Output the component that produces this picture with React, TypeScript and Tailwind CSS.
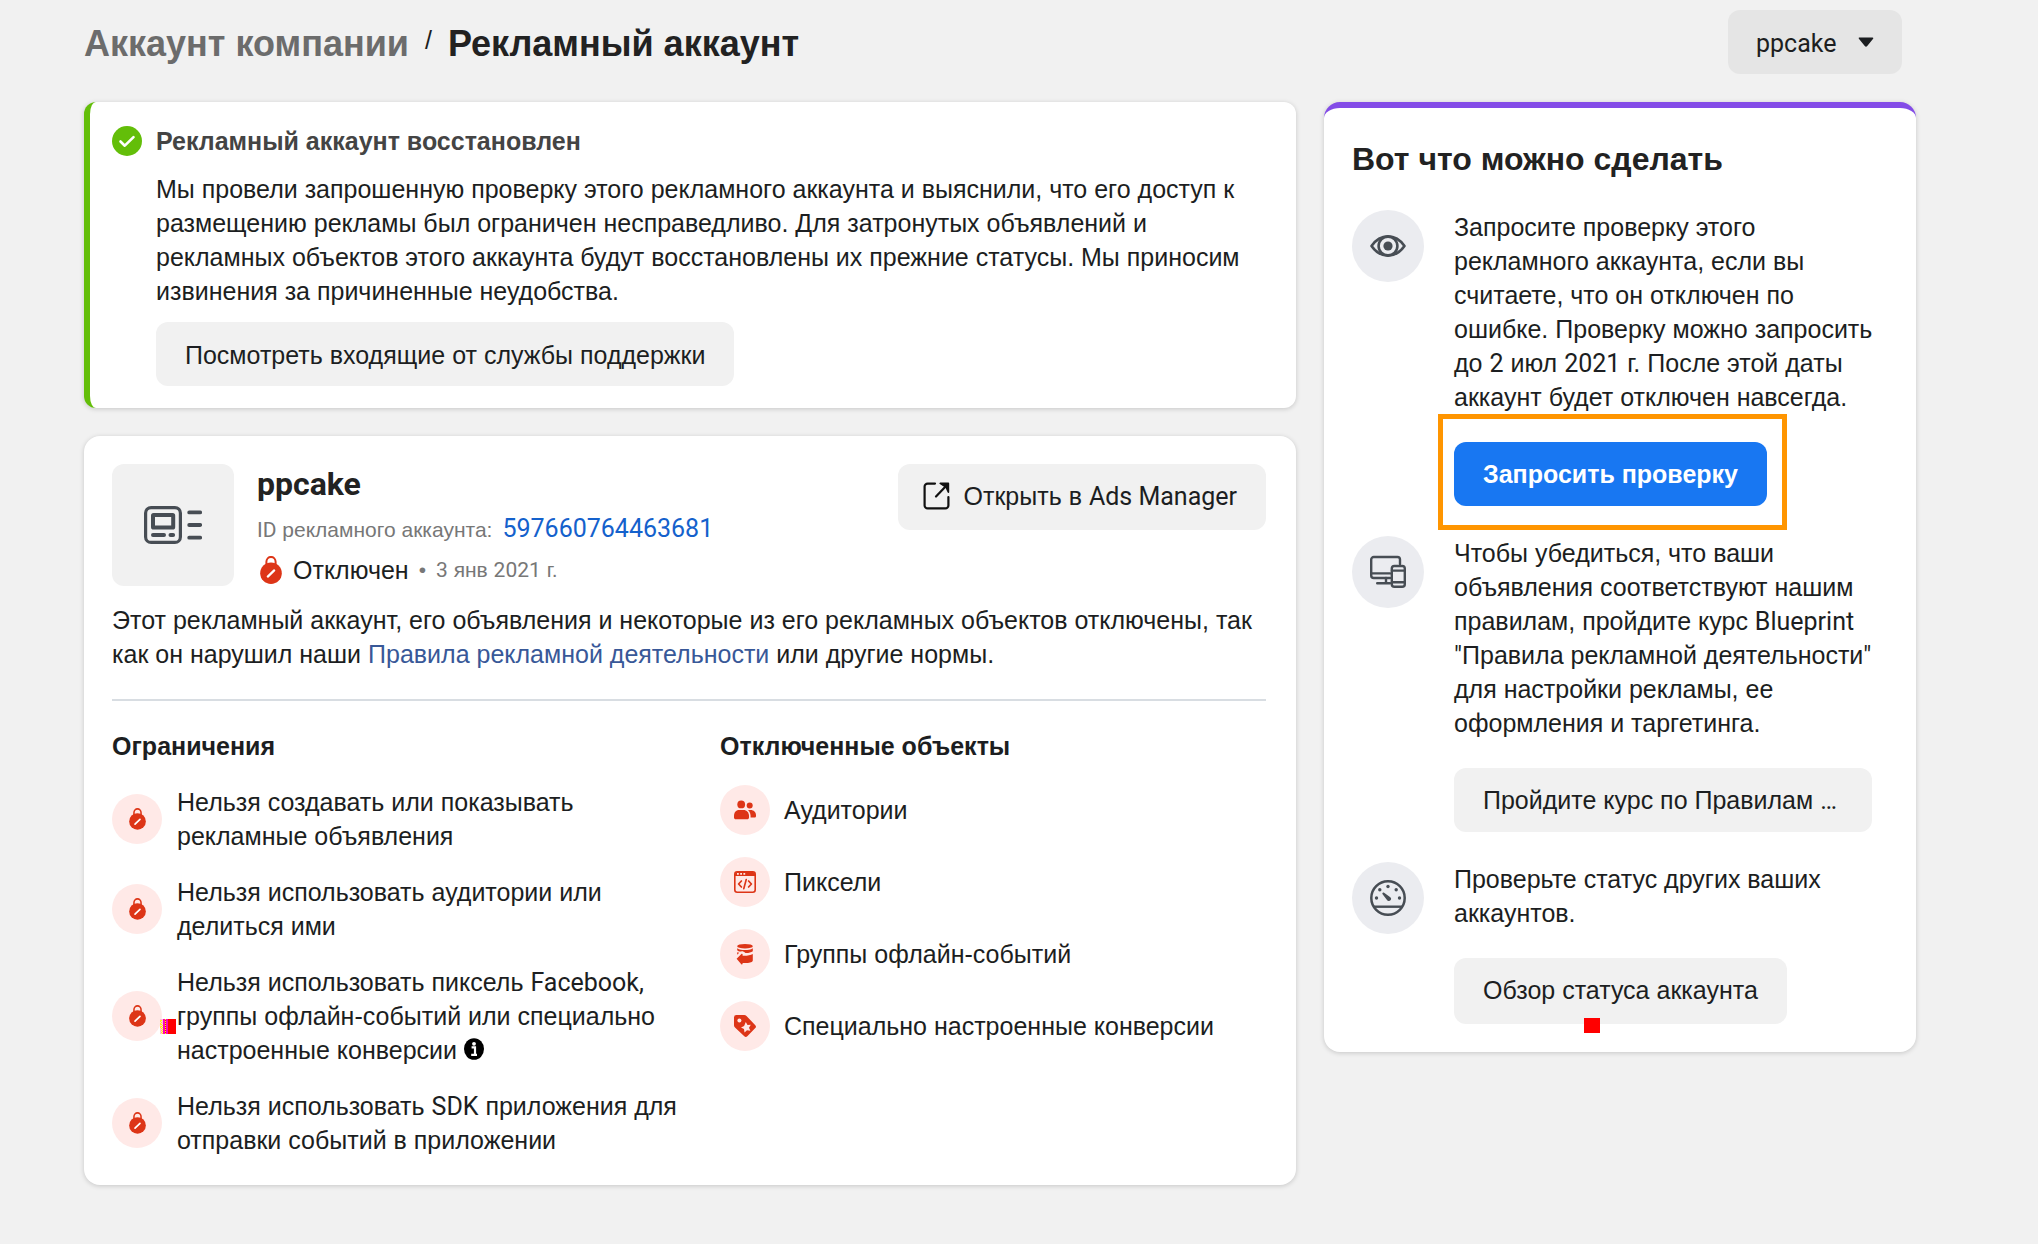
import React from 'react';

interface IconProps {
  className?: string;
}

const RED = '#dd3517';
const SLATE = '#474d54';

// Latin words and digits are set in Roboto, Cyrillic in the body face.
const Latin: React.FC<{ children: React.ReactNode }> = ({ children }) => (
  <span className="font-['Roboto',sans-serif] leading-none">{children}</span>
);

const CheckIcon: React.FC<IconProps> = ({ className }) => (
  <svg viewBox="0 0 30 30" className={className} aria-hidden="true">
    <circle cx="15" cy="15" r="15" fill="#63be09" />
    <path d="M8.5 15.5l4.3 4.2 8.7-8.6" fill="none" stroke="#fff" strokeWidth="2.6" strokeLinecap="round" strokeLinejoin="round" />
  </svg>
);

const LockIcon: React.FC<IconProps> = ({ className }) => (
  <svg viewBox="0 0 22 28" className={className} aria-hidden="true">
    <path d="M6.4 9V5.8a4.6 4.9 0 0 1 9.2 0V9" fill="none" stroke={RED} strokeWidth="2" />
    <circle cx="11" cy="17.2" r="10.8" fill={RED} />
    <path d="M7.8 20.6l6.4-6.2" stroke="#fff" strokeWidth="2.2" strokeLinecap="round" />
  </svg>
);

const AdAccountIcon: React.FC<IconProps> = ({ className }) => (
  <svg viewBox="0 0 58 38" className={className} fill="none" stroke={SLATE} aria-hidden="true">
    <rect x="1.6" y="1.6" width="34.8" height="34.8" rx="5.5" strokeWidth="3.2" />
    <rect x="9" y="9" width="20.2" height="12.6" rx="0.6" strokeWidth="4" />
    <path d="M9 29h11M26.5 29h2.6" strokeWidth="4" strokeLinecap="round" />
    <path d="M45.2 6.4h11M45.2 19h11M45.2 31.7h11" strokeWidth="3.8" strokeLinecap="round" />
  </svg>
);

const ExternalIcon: React.FC<IconProps> = ({ className }) => (
  <svg viewBox="0 0 27 28" className={className} fill="none" stroke="#111" strokeWidth="2.2" aria-hidden="true">
    <path d="M12 1.6H4.6a3 3 0 0 0-3 3v18.8a3 3 0 0 0 3 3h17.8a3 3 0 0 0 3-3V15" strokeLinecap="round" />
    <path d="M13 14.5L24 3" strokeLinecap="round" />
    <path d="M17.2 1.4h8.2v8.8L23 5z" fill="#111" stroke="#111" strokeWidth="1.6" strokeLinejoin="round" />
  </svg>
);

const EyeIcon: React.FC<IconProps> = ({ className }) => (
  <svg viewBox="0 0 36 36" className={className} fill="none" stroke={SLATE} strokeWidth="2.6" aria-hidden="true">
    <path d="M1.5 18C6 11.6 11.4 8.4 18 8.4S30 11.6 34.5 18C30 24.4 24.6 27.6 18 27.6S6 24.4 1.5 18z" strokeLinejoin="round" />
    <circle cx="18" cy="18" r="9.4" />
    <circle cx="18" cy="18" r="4.6" fill={SLATE} stroke="none" />
  </svg>
);

const DevicesIcon: React.FC<IconProps> = ({ className }) => (
  <svg viewBox="0 0 36 36" className={className} fill="none" stroke={SLATE} strokeWidth="2.4" strokeLinecap="round" aria-hidden="true">
    <path d="M30 10V5.6A2.6 2.6 0 0 0 27.4 3H3.8a2.6 2.6 0 0 0-2.6 2.6v15.8A2.6 2.6 0 0 0 3.8 24H20" />
    <path d="M1.5 19.4H20M16 24v5M7.2 29.3H20" />
    <rect x="21.8" y="12" width="13" height="20.8" rx="2.6" />
    <path d="M22 16.6h12.6M22 28.2h12.6" />
  </svg>
);

const GaugeIcon: React.FC<IconProps> = ({ className }) => (
  <svg viewBox="0 0 36 36" className={className} fill={SLATE} aria-hidden="true">
    <circle cx="18" cy="18" r="16.7" fill="none" stroke={SLATE} strokeWidth="2.5" />
    <path d="M4 26.7h28" stroke={SLATE} strokeWidth="2.4" />
    <circle cx="6.5" cy="18" r="1.7" />
    <circle cx="9.8" cy="9.8" r="1.7" />
    <circle cx="18" cy="6.5" r="1.7" />
    <circle cx="26.2" cy="9.8" r="1.7" />
    <circle cx="29.5" cy="18" r="1.7" />
    <path d="M12.6 14.2c-.8-1.2.4-2.300 1.500-1.500l5.900 4.200a2.200 2.200 0 1 1-3 3z" />
  </svg>
);

const PeopleIcon: React.FC<IconProps> = ({ className }) => (
  <svg viewBox="0 0 22 22" className={className} fill={RED} aria-hidden="true">
    <circle cx="7.2" cy="5.4" r="3.9" />
    <circle cx="15.7" cy="6.4" r="3" />
    <path d="M5.2 11h4.2c3.4 0 5.6 2.6 5.6 6v1.4c0 1.2-.8 1.8-1.8 1.8H1.8c-1 0-1.8-.6-1.8-1.8V17c0-3.4 1.8-6 5.2-6z" />
    <path d="M14 11h2.6c3.2 0 5.4 2.2 5.4 5.2v.8c0 1-.6 1.6-1.6 1.6h-3.8c.2-3.2-.6-5.8-2.6-7.6z" />
  </svg>
);

const CodeIcon: React.FC<IconProps> = ({ className }) => (
  <svg viewBox="0 0 22 22" className={className} fill="none" stroke={RED} aria-hidden="true">
    <rect x="0.8" y="0.8" width="20.4" height="20.4" rx="2.4" strokeWidth="1.6" />
    <path d="M1 3.2A2.2 2.2 0 0 1 3.2 1h15.6A2.2 2.2 0 0 1 21 3.2V5H1z" fill={RED} stroke="none" />
    <path d="M3 2.9h1.8M6.2 2.9H8M9.4 2.9h1.8" stroke="#ffe9e7" strokeWidth="1.6" />
    <path d="M7.4 10L4.6 13l2.8 3M14.6 10l2.8 3-2.8 3M12.2 8.6l-2.4 9" strokeWidth="1.7" strokeLinecap="round" strokeLinejoin="round" />
  </svg>
);

const DatabaseIcon: React.FC<IconProps> = ({ className }) => (
  <svg viewBox="0 0 22 22" className={className} fill={RED} aria-hidden="true">
    <ellipse cx="11" cy="3.2" rx="7.8" ry="2.3" />
    <path d="M3.2 5.2c2 1.5 5 1.9 7.8 1.9s5.8-.4 7.8-1.9v3c-1.8 1.5-4.8 1.8-7.3 1.7C10 8.6 8.2 8 7.2 8.4 5.6 8.600 4 8 3.200 7.200z" />
    <path d="M2.6 15.8l4.8-4.8c.6-.5 1.2-.1 1.2.6v1.1h1.6c3.4 0 6.600-.3 8.600-1.7v6.200c0 1.800-2.800 2.700-6 2.700H8.600v.8c0 .8-.8 1.100-1.300.6z" />
    <path d="M3.2 9.2l2 .6-2 2z" />
  </svg>
);

const TagIcon: React.FC<IconProps> = ({ className }) => (
  <svg viewBox="0 0 22 22" className={className} aria-hidden="true">
    <path d="M0 2.4A2.4 2.4 0 0 1 2.4 0h7.8c.9 0 1.7.3 2.3 1l8.8 9.2c.9.9.9 2 0 2.9l-8 8.2c-.9.9-2.1.9-3 0L1 12.6c-.7-.7-1-1.4-1-2.3z" fill={RED} />
    <circle cx="5.4" cy="5.4" r="2" fill="#ffe9e7" />
    <path d="M11.8 7l1.7 2.9 3.3-.1-1.8 2.9 1.4 3.1-3.4-.6-2.5 2.3-.5-3.4-3-1.6 3.1-1.5z" fill="#ffe9e7" />
  </svg>
);

const InfoIcon: React.FC<IconProps> = ({ className }) => (
  <svg viewBox="0 0 20 22" className={className} aria-hidden="true">
    <ellipse cx="10" cy="11" rx="10" ry="10.8" fill="#000" />
    <circle cx="10" cy="5.8" r="1.9" fill="#fff" />
    <path d="M7.6 9.4H11v7M7.2 16.8h5.8" stroke="#fff" strokeWidth="2.2" fill="none" />
  </svg>
);

// Small striped marker left over the third restriction.
const GlitchMarker: React.FC<IconProps> = ({ className }) => (
  <svg viewBox="0 0 16 15" className={className} aria-hidden="true">
    <rect width="16" height="15" fill="#f00" />
    <path d="M0 0h3v15H0z" fill="#fbd" />
    <path d="M3 0h2v15H3zM6 0h2v15H6z" fill="#f0b" />
    <path d="M1.5 1v14M2.5 6v9M5.500 0v15" stroke="#ff0" strokeDasharray="1 1" />
    <path d="M0.500 1v9" stroke="#ff0" strokeDasharray="2 1" />
  </svg>
);

const ActionButton: React.FC<{ children: React.ReactNode; className?: string }> = ({ children, className = 'h-16' }) => (
  <button type="button" className={`flex items-center rounded-xl bg-[#f1f1f1] px-[29px] text-left whitespace-nowrap text-[#1c1e21] ${className}`}>
    {children}
  </button>
);

const Tip: React.FC<{ icon: React.ReactNode; text: React.ReactNode; children: React.ReactNode }> = ({ icon, text, children }) => (
  <li className="flex items-start gap-[30px]">
    <span className="flex size-[72px] shrink-0 items-center justify-center rounded-full bg-[#ebecf0]">{icon}</span>
    <div className="flex min-w-0 flex-col items-start gap-7">
      <p>{text}</p>
      {children}
    </div>
  </li>
);

const Badge: React.FC<{ children: React.ReactNode }> = ({ children }) => (
  <span className="flex size-[50px] shrink-0 items-center justify-center rounded-full bg-[#ffe9e7]">{children}</span>
);

const restrictions: { text: React.ReactNode; marker?: boolean }[] = [
  { text: 'Нельзя создавать или показывать рекламные объявления' },
  { text: 'Нельзя использовать аудитории или делиться ими' },
  {
    text: (
      <>
        Нельзя использовать пиксель <Latin>Facebook,</Latin> группы офлайн-событий или специально настроенные конверсии{' '}
        <InfoIcon className="inline h-[22px] w-5 align-[-1px]" />
      </>
    ),
    marker: true,
  },
  { text: <>Нельзя использовать <Latin>SDK</Latin> приложения для отправки событий в приложении</> },
];

const disabledObjects = [
  { text: 'Аудитории', Icon: PeopleIcon },
  { text: 'Пиксели', Icon: CodeIcon },
  { text: 'Группы офлайн-событий', Icon: DatabaseIcon },
  { text: 'Специально настроенные конверсии', Icon: TagIcon },
];

const CARD = 'bg-white shadow-[0_1px_5px_rgba(0,0,0,0.18)]';

export default function App() {
  return (
    <div className="min-h-screen bg-[#f1f1f1] pt-2.5 pr-[122px] pb-15 pl-[84px] font-['Liberation_Sans',Arial,sans-serif] text-[25px] leading-[34px] text-[#1c1e21]">
      <header className="mb-7 flex h-16 items-center justify-between pr-3.5">
        <nav className="flex items-center gap-4 pt-1">
          <a href="#" className="text-[36px] leading-[44px] font-bold text-[#6c6c6c]">Аккаунт компании</a>
          <span className="-mt-2">/</span>
          <h1 className="text-[36px] leading-[44px] font-bold text-[#222]">Рекламный аккаунт</h1>
        </nav>
        <div className="relative">
          <select aria-label="Аккаунт" className="h-16 appearance-none rounded-xl bg-[#e5e5e5] pt-1 pr-[65px] pl-7 font-['Roboto',sans-serif] text-[25px] leading-[34px]">
            <option>ppcake</option>
          </select>
          <svg viewBox="0 0 16 10" className="pointer-events-none absolute top-[27px] right-7 h-2.5 w-4" aria-hidden="true">
            <path d="M1.5 1.2h13L8.6 8.6q-.6.7-1.2 0z" fill="#1c1e21" stroke="#1c1e21" strokeWidth="1.6" strokeLinejoin="round" />
          </svg>
        </div>
      </header>

      <div className="grid grid-cols-[minmax(0,1fr)_592px] items-start gap-7">
        <main className="flex flex-col gap-7">
          <section className={`flex gap-3.5 rounded-xl border-l-[6px] border-[#63be09] p-[22px] ${CARD}`}>
            <CheckIcon className="mt-0.5 size-[30px] shrink-0" />
            <div className="flex flex-col items-start gap-3.5">
              <h2 className="font-bold text-[#444]">Рекламный аккаунт восстановлен</h2>
              <p>
                Мы провели запрошенную проверку этого рекламного аккаунта и выяснили, что его доступ к размещению рекламы был
                ограничен несправедливо. Для затронутых объявлений и рекламных объектов этого аккаунта будут восстановлены их
                прежние статусы. Мы приносим извинения за причиненные неудобства.
              </p>
              <ActionButton className="h-16 pt-0.5">Посмотреть входящие от службы поддержки</ActionButton>
            </div>
          </section>

          <section className={`rounded-2xl py-7 pr-[30px] pl-7 ${CARD}`}>
            <div className="flex items-start gap-[23px]">
              <div className="flex size-[122px] shrink-0 items-center justify-center rounded-xl bg-[#f1f1f1]">
                <AdAccountIcon className="h-[38px] w-[58px]" />
              </div>
              <div className="flex-1">
                <h2 className="font-['Roboto',sans-serif] text-[32px] leading-[40px] font-bold text-[#222]">ppcake</h2>
                <div className="mt-2 flex items-baseline gap-2.5">
                  <span className="text-[21px] text-[#777]"><Latin>ID</Latin> рекламного аккаунта:</span>
                  <a href="#" className="font-['Roboto',sans-serif] text-[#1461cc]">597660764463681</a>
                </div>
                <div className="mt-1.5 flex h-[34px] items-center gap-2.5">
                  <LockIcon className="ml-0.5 h-7 w-6" />
                  <span>Отключен</span>
                  <span className="text-[21px] text-[#777]">•</span>
                  <span className="text-[21px] text-[#777]"><Latin>3</Latin> янв <Latin>2021</Latin> г.</span>
                </div>
              </div>
              <ActionButton className="h-[66px] pb-0.5">
                <ExternalIcon className="mr-3.5 -ml-1 h-7 w-[27px]" />
                <span>Открыть в <Latin>Ads Manager</Latin></span>
              </ActionButton>
            </div>

            <p className="mt-4">
              Этот рекламный аккаунт, его объявления и некоторые из его рекламных объектов отключены, так как он нарушил наши{' '}
              <a href="#" className="text-[#385898]">Правила рекламной деятельности</a> или другие нормы.
            </p>
            <hr className="my-7 border-t-2 border-[#d8dde2]" />

            <div className="grid grid-cols-[578fr_546fr] items-start gap-[30px]">
              <div>
                <h3 className="mb-[22px] font-bold">Ограничения</h3>
                <ul className="flex flex-col gap-[22px]">
                  {restrictions.map((item, i) => (
                    <li key={i} className="relative flex items-center gap-[15px]">
                      <Badge><LockIcon className="h-[22px] w-[17px]" /></Badge>
                      <p>{item.text}</p>
                      {item.marker && <GlitchMarker className="absolute top-[54px] left-12 h-[15px] w-4" />}
                    </li>
                  ))}
                </ul>
              </div>
              <div>
                <h3 className="mb-[22px] font-bold">Отключенные объекты</h3>
                <ul className="flex flex-col gap-[22px]">
                  {disabledObjects.map(({ text, Icon }) => (
                    <li key={text} className="flex items-center gap-3.5">
                      <Badge><Icon className="size-[22px]" /></Badge>
                      <span>{text}</span>
                    </li>
                  ))}
                </ul>
              </div>
            </div>
          </section>
        </main>

        <aside className={`rounded-2xl border-t-[6px] border-[#834be7] p-7 ${CARD}`}>
          <h2 className="mb-7 text-[32px] leading-[46px] font-bold text-[#222]">Вот что можно сделать</h2>
          <ul className="flex flex-col gap-[30px]">
            <Tip
              icon={<EyeIcon className="size-9" />}
              text={
                <>
                  Запросите проверку этого рекламного аккаунта, если вы считаете, что он отключен по ошибке. Проверку можно
                  запросить до <Latin>2</Latin> июл <Latin>2021</Latin> г. После этой даты аккаунт будет отключен навсегда.
                </>
              }
            >
              <div className="relative">
                <button type="button" className="h-16 rounded-xl bg-[#1877f2] px-[29px] font-bold whitespace-nowrap text-white">
                  Запросить проверку
                </button>
                <div className="pointer-events-none absolute -top-7 -right-5 -bottom-6 -left-4 border-5 border-[#ff9500]" />
              </div>
            </Tip>
            <Tip
              icon={<DevicesIcon className="size-9" />}
              text={
                <>
                  Чтобы убедиться, что ваши объявления соответствуют нашим правилам, пройдите курс <Latin>Blueprint "</Latin>
                  Правила рекламной деятельности<Latin>"</Latin> для настройки рекламы, ее оформления и таргетинга.
                </>
              }
            >
              <ActionButton className="h-16 w-[418px]">
                <span>Пройдите курс по Правилам <Latin>…</Latin></span>
              </ActionButton>
            </Tip>
            <Tip icon={<GaugeIcon className="size-9" />} text="Проверьте статус других ваших аккаунтов.">
              <div className="relative">
                <ActionButton className="h-[66px] pb-0.5">Обзор статуса аккаунта</ActionButton>
                <span className="absolute top-[60px] left-[130px] h-[15px] w-4 bg-[#f00]" />
              </div>
            </Tip>
          </ul>
        </aside>
      </div>
    </div>
  );
}
